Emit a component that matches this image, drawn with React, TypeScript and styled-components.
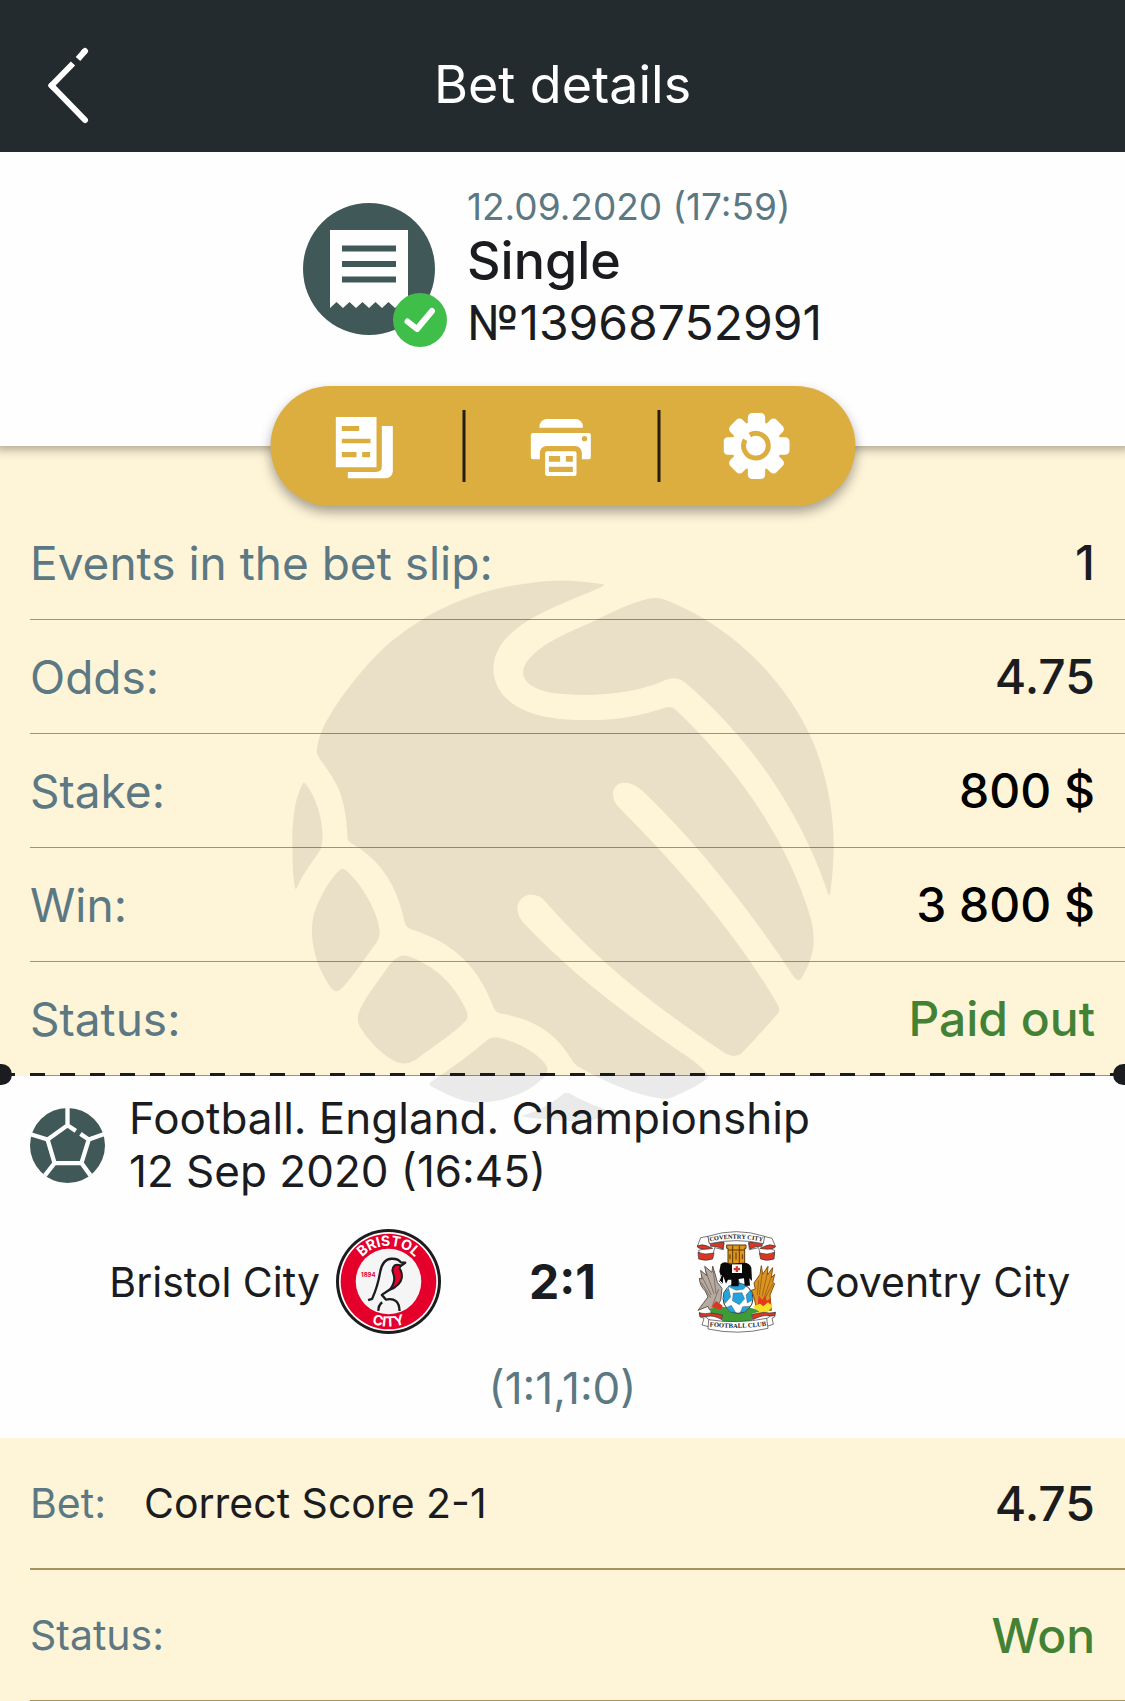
import React from "react";
import styled, { createGlobalStyle } from "styled-components";

const color = {
  bar: "#242b2e",
  ink: "#1a1c20",
  teal: "#405858",
  muted: "#5c7883",
  cream: "#fef4d8",
  gold: "#dcae40",
  green: "#438234",
  rule: "#a8935a",
};

const GlobalStyle = createGlobalStyle`
  *, *::before, *::after { box-sizing: border-box; }
  body {
    margin: 0;
    background: #fff;
    color: ${color.ink};
    font-family: Inter, Roboto, "Liberation Sans", sans-serif;
    overflow-x: hidden;
  }
  svg { display: block; }
`;

const Page = styled.main`
  display: flex;
  flex-direction: column;
  background: #fefefe;
`;

const TopBar = styled.header`
  position: relative;
  z-index: 3;
  display: grid;
  grid-template-columns: 1fr auto 1fr;
  align-items: center;
  height: 152px;
  padding: 18px 42px 0;
  background: ${color.bar};
  color: #fff;
`;

const Title = styled.h1`
  margin: 0;
  font-size: 52px;
  line-height: 60px;
  font-weight: 400;
`;

const IconButton = styled.button`
  justify-self: start;
  padding: 0;
  border: 0;
  background: none;
  color: inherit;
  cursor: pointer;
`;

const Hero = styled.section`
  position: relative;
  z-index: 2;
  display: flex;
  justify-content: center;
  gap: 32px;
  padding: 33px 30px 93px;
  background: #fefefe;
  box-shadow: 0 -3px 10px 6px rgba(0, 0, 0, 0.35);
`;

const SlipBadge = styled.div`
  position: relative;
  align-self: center;
  flex: none;
`;

const PaidMark = styled.div`
  position: absolute;
  right: -12px;
  bottom: -12px;
`;

const SlipText = styled.div`
  display: flex;
  flex-direction: column;
`;

const SlipDate = styled.time`
  font-size: 37px;
  line-height: 44px;
  color: ${color.muted};
`;

const SlipKind = styled.h2`
  margin: 0;
  font-size: 52px;
  line-height: 64px;
  font-weight: 500;
`;

const SlipNumber = styled.span`
  font-size: 48px;
  line-height: 60px;
`;

const ActionPill = styled.div`
  position: absolute;
  left: 50%;
  bottom: -60px;
  transform: translateX(-50%);
  display: grid;
  grid-template-columns: repeat(3, 1fr);
  align-items: center;
  width: 52%;
  height: 120px;
  border-radius: 60px;
  background: ${color.gold};
  box-shadow: 0 6px 12px rgba(0, 0, 0, 0.35);
`;

const ActionButton = styled.button`
  display: flex;
  align-items: center;
  justify-content: center;
  height: 72px;
  padding: 0;
  border: 0;
  background: none;
  cursor: pointer;

  &:not(:last-child) {
    border-right: 3px solid #241d10;
  }
`;

const Summary = styled.section`
  position: relative;
  padding-top: 60px;
  background: ${color.cream};
`;

const Rows = styled.dl`
  margin: 0;
  padding-left: 30px;
`;

const Row = styled.div<{ $size?: "regular" | "tall" | "last" }>`
  display: flex;
  align-items: center;
  gap: 38px;
  height: ${(p) => (p.$size === "tall" ? 132 : p.$size === "last" ? 131 : 114)}px;
  padding-right: 30px;
  border-bottom: ${(p) => (p.$size === "tall" ? 2 : 1)}px solid ${color.rule};
`;

const Label = styled.dt<{ $small?: boolean }>`
  font-size: ${(p) => (p.$small ? 41 : 46)}px;
  color: ${color.muted};
`;

const Value = styled.dd<{ $tone?: string; $plain?: boolean }>`
  margin: 0 0 0 ${(p) => (p.$plain ? "0" : "auto")};
  font-size: ${(p) => (p.$plain ? 41 : 48)}px;
  font-weight: ${(p) => (p.$plain ? 400 : 500)};
  color: ${(p) => p.$tone || color.ink};
`;

const Watermark = styled.svg`
  position: absolute;
  top: 124px;
  left: 50%;
  transform: translateX(-50%);
  z-index: 1;
  pointer-events: none;
`;

const TearLine = styled.div`
  position: absolute;
  left: 0;
  right: 0;
  bottom: 0;
  height: 3px;
  background: repeating-linear-gradient(90deg, ${color.ink} 0 15px, transparent 15px 30px);

  &::before,
  &::after {
    content: "";
    position: absolute;
    top: -9px;
    width: 12px;
    height: 21px;
    background: ${color.ink};
  }
  &::before {
    left: 0;
    border-radius: 0 12px 12px 0;
  }
  &::after {
    right: 0;
    border-radius: 12px 0 0 12px;
  }
`;

const Match = styled.section`
  padding: 16px 30px 25px;
`;

const MatchHead = styled.div`
  display: flex;
  align-items: center;
  gap: 24px;
`;

const MatchTitle = styled.p`
  margin: 0;
  font-size: 44px;
  line-height: 53px;
`;

const Scoreboard = styled.div`
  display: grid;
  grid-template-columns: 1fr 243px 1fr;
  align-items: center;
  margin-top: 31px;
`;

const Team = styled.div<{ $home?: boolean }>`
  display: flex;
  align-items: center;
  justify-content: ${(p) => (p.$home ? "flex-end" : "flex-start")};
  gap: 16px;
  font-size: 41px;
  line-height: 48px;
  white-space: nowrap;
`;

const Score = styled.strong`
  text-align: center;
  font-size: 48px;
  font-weight: 700;
`;

const HalfScore = styled.p`
  margin: 29px 0 0;
  text-align: center;
  font-size: 44px;
  line-height: 50px;
  color: ${color.muted};
`;

const Pick = styled.section`
  background: ${color.cream};
`;

const BackIcon = () => (
  <svg width="52" height="84" viewBox="0 0 52 84" fill="none" stroke="#fff" strokeWidth="6">
    <path d="M43 8L42 9" strokeLinecap="round" />
    <path d="M43 8L36 16" />
    <path d="M31 20.500L9.500 42.500L12 45" strokeLinejoin="round" />
    <path d="M9.500 42.500L43 77" strokeLinecap="round" />
  </svg>
);

const SlipIcon = () => (
  <svg width="132" height="132" viewBox="304 203 132 132">
    <circle cx="370" cy="269" r="66" fill={color.teal} />
    <path
      fill="#fefefe"
      d="M331 230H409V308L402.500 302L396 308L389.500 302L383 308L376.500 302L370 308L363.500 302L357 308L350.500 302L344 308L337.500 302L331 308Z"
    />
    <path d="M343 248.500H397M343 264H397M343 279.500H397" stroke={color.teal} strokeWidth="6" />
  </svg>
);

const CheckIcon = () => (
  <svg width="54" height="54" viewBox="0 0 54 54">
    <circle cx="27" cy="27" r="27" fill="#3fbf4a" />
    <path
      d="M14.500 28.500L24 36L39 18"
      fill="none"
      stroke="#fff"
      strokeWidth="6"
      strokeLinecap="round"
      strokeLinejoin="round"
    />
  </svg>
);

const CopyIcon = () => (
  <svg width="66" height="66" viewBox="41 69 198 198">
    <path fill="#fff" d="M48 81H170V232H48Z" />
    <path fill="#fff" d="M186 108h33v135a22 22 0 0 1-22 22h-113v-19h85q17 0 17-17z" />
    <path fill={color.gold} d="M66 108h52v15h-52zM66 146h86v14h-86zM66 186h44v16h-44zM127 186h24v16h-24z" />
  </svg>
);

const PrintIcon = () => (
  <svg width="66" height="66" viewBox="626 69 198 198">
    <path fill="#fff" d="M659 113v-4a22 22 0 0 1 22-22h86a22 22 0 0 1 22 22v4z" />
    <path
      fill="#fff"
      d="M639 129h168a6 6 0 0 1 6 6v67a6 6 0 0 1-6 6h-21v-20a20 20 0 0 0-20-20h-86a20 20 0 0 0-20 20v20h-21a6 6 0 0 1-6-6v-67a6 6 0 0 1 6-6z"
    />
    <rect x="676" y="184" width="94" height="74" rx="6" fill="#fff" />
    <path fill={color.gold} d="M687 198h34v17h-34zM738 198h21v17h-21zM687 230h72v16h-72z" />
    <circle cx="794" cy="146" r="8" fill={color.gold} />
  </svg>
);

const GearIcon = () => (
  <svg width="68" height="66" viewBox="-99 -99 204 198">
    <g fill="#fff">
      <circle r="74" />
      <rect x="-26" y="-99" width="52" height="198" rx="13" />
      <rect x="-99" y="-26" width="198" height="52" rx="13" />
      <rect x="-26" y="-98" width="52" height="196" rx="13" transform="rotate(45)" />
      <rect x="-26" y="-98" width="52" height="196" rx="13" transform="rotate(-45)" />
    </g>
    <path
      d="M-20 -33A37 37 0 1 1 -34 -19"
      fill="none"
      stroke={color.gold}
      strokeWidth="15"
    />
    <path d="M-42 -36L-12 -12" stroke="#fff" strokeWidth="13" />
  </svg>
);

const BallIcon = () => (
  <svg width="75" height="75" viewBox="90 137 226 226">
    <circle cx="203" cy="250" r="113" fill={color.teal} />
    <path
      fill="none"
      stroke="#fefefe"
      strokeWidth="13"
      d="M203 137V190M228 206L203 189L143 232L164 303H245L267 232L242 215M143 232L94 217M267 232L312 216M164 303L135 340M245 303L272 340"
    />
  </svg>
);

const BristolCrest = () => (
  <svg width="105" height="105" viewBox="49 41 314 314" role="img" aria-label="Bristol City crest">
    <defs>
      <path id="bristol-top" d="M99 198A107 107 0 0 1 313 198" />
      <path id="bristol-bottom" d="M71 198A135 135 0 0 0 341 198" />
    </defs>
    <circle cx="206" cy="198" r="157" fill="#1c1c1e" />
    <circle cx="206" cy="198" r="148" fill="#fff" />
    <circle cx="206" cy="198" r="143" fill="#e4002b" />
    <circle cx="206" cy="198" r="98" fill="#f5f5f6" />
    <g fill="#fff" fontWeight="700" fontSize="42" textAnchor="middle">
      <text>
        <textPath href="#bristol-top" startOffset="50%">BRISTOL</textPath>
      </text>
      <text>
        <textPath href="#bristol-bottom" startOffset="50%">CITY</textPath>
      </text>
    </g>
    <text x="124" y="184" fontSize="18" fontWeight="700" fill="#e4002b">1894</text>
    <path
      d="M224 150Q214 160 220 174Q230 200 208 224Q242 210 246 186Q247 168 239 160L242 150Q232 146 224 150Z"
      fill="#e4002b"
      stroke="#1c1c1e"
      strokeWidth="6"
      strokeLinejoin="round"
    />
    <g fill="none" stroke="#1c1c1e" strokeWidth="7" strokeLinejoin="round">
      <path d="M145 254L157 250Q174 212 181 170Q188 131 215 130Q235 129 243 141L256 142L242 152" />
      <path d="M210 222L186 238L198 252Q238 244 239 286" />
      <path d="M187 260Q175 270 176 286" />
    </g>
  </svg>
);

const CoventryCrest = () => (
  <svg width="105" height="105" viewBox="12 42 315 315" role="img" aria-label="Coventry City crest">
    <defs>
      <path id="coventry-top" d="M84 81Q168 61 254 81" />
      <path id="coventry-bottom" d="M86 334Q174 344 262 332" />
    </defs>
    <g stroke="#333" strokeWidth="2" strokeLinejoin="round">
      <path fill="#fff" d="M84 64L62 68L52 94L80 100L56 106L58 120L100 116L104 98L130 104L132 84L88 84Z" />
      <path fill="#fff" d="M252 64L276 70L286 94L262 98L284 106L282 122L240 116L236 98L208 104L206 84L250 84Z" />
      <path fill="#dc3524" d="M52 93Q66 86 82 93L98 100Q70 106 54 98ZM54 112Q78 122 102 114L98 132Q76 140 56 132ZM90 82L132 82L128 102Q110 92 92 94Z" />
      <path fill="#dc3524" d="M286 93Q270 86 256 93L240 100Q268 106 284 98ZM284 112Q260 122 238 114L242 132Q262 140 282 132ZM248 82L206 82L210 102Q228 92 246 94Z" />
      <path fill="#fff" d="M84 64Q168 36 254 64L250 86Q168 68 88 86Z" />
    </g>
    <path fill="#e0961c" stroke="#5b3808" strokeWidth="3" d="M140 90H198V100H194V146H144V100H140Z" />
    <path stroke="#5b3808" strokeWidth="3" d="M158 92V145M178 92V145M145 105H194M150 118V132M168 112V134M187 118V132" />
    <path
      fill="#b7aaa0"
      stroke="#62584f"
      strokeWidth="3"
      d="M98 153L96 172L74 154L80 182L62 166L66 192L58 190Q60 214 76 228L84 246Q70 264 54 286L84 274L88 284L108 280L122 256L126 220L112 202Q106 178 98 153Z"
    />
    <path stroke="#62584f" strokeWidth="2" fill="none" d="M100 168L108 236M78 170L102 236M66 185L94 240M64 202L92 248M116 222L98 270" />
    <path
      fill="#dc9420"
      stroke="#855210"
      strokeWidth="3"
      d="M244 152L240 178L222 204L226 222L214 226L222 246L230 284L274 286L270 240L284 206L278 202L284 178L274 188L278 158L262 180L264 154L248 178Z"
    />
    <path stroke="#855210" strokeWidth="2" fill="none" d="M246 178L238 240M262 176L246 244M274 186L252 248M278 206L254 252M236 196L232 240" />
    <path fill="#e4381f" d="M236 240L246 254L256 242L260 258L272 250L270 284L232 284Z" />
    <path fill="#f7df25" d="M220 274L240 266L250 274L264 262L278 274L262 292L234 294Z" />
    <path fill="#3e9b35" d="M90 282Q124 268 170 284Q214 270 238 290L216 296V322H126L128 300L92 298Z" />
    <path fill="#dc3524" d="M94 276L108 258L128 272L122 284Z" />
    <circle cx="174" cy="250" r="45" fill="#fff" stroke="#333" strokeWidth="3" />
    <path
      fill="#23a4df"
      stroke="#333"
      strokeWidth="1"
      d="M160 234L186 233L194 251L178 269L157 257ZM144 214L166 204L202 210L190 223L168 226ZM130 234L146 220L152 246L134 266ZM212 224L219 254L202 264L198 240ZM138 278L154 271L168 294L152 291ZM188 275L210 274L196 290L180 294ZM166 206L172 192L182 206Z"
    />
    <path
      fill="#080808"
      d="M122 148Q134 136 150 148L182 144Q208 140 214 158L216 198L208 190L210 212H194L192 190L176 192V214H154V194L144 194L138 206L130 184L128 208L116 198Q126 184 118 170Z"
    />
    <path d="M124 180L118 196L128 206" stroke="#fff" strokeWidth="3" fill="none" />
    <path fill="#fff" d="M156 148H186V174H156Z" />
    <path fill="#dc3524" d="M167 154h7v5h6v7h-6v5h-7v-5h-6v-7h6z" />
    <g stroke="#333" strokeWidth="2" strokeLinejoin="round">
      <path fill="#fff" d="M90 316L58 292L60 306L72 310L66 330L90 336ZM256 314L286 292L284 306L276 310L280 328L260 334Z" />
      <path fill="#dc3524" d="M58 294Q76 298 94 294L128 300L126 314Q100 300 84 304Q68 308 60 304ZM286 292Q268 296 252 292L216 298L218 314Q246 300 262 302Q276 304 284 302Z" />
      <path fill="#fff" d="M86 314Q174 328 260 310L264 340Q174 362 84 342Z" />
    </g>
    <g fill="#1c1c1e" fontFamily="Liberation Serif, serif" fontWeight="700" textAnchor="middle">
      <text fontSize="19">
        <textPath href="#coventry-top" startOffset="50%">COVENTRY CITY</textPath>
      </text>
      <text fontSize="20">
        <textPath href="#coventry-bottom" startOffset="50%">FOOTBALL CLUB</textPath>
      </text>
    </g>
  </svg>
);

const BallWatermark = () => (
  <Watermark width="560" height="560" viewBox="-6 0 1568 1568" aria-hidden="true">
    <g fill="#000" fillOpacity="0.08">
      <path d="M892 40Q780 22 700 34C520 55 390 120 280 215C200 290 130 390 105 445Q84 495 90 515C95 530 130 570 148 610C172 665 172 720 175 755Q178 762 190 768C270 815 315 890 333 980Q337 1000 350 1005C430 1030 480 1065 515 1105C550 1145 570 1190 586 1230Q590 1238 600 1241C700 1258 760 1300 800 1368Q812 1388 825 1393C900 1435 980 1470 1050 1480Q1068 1483 1085 1476C1120 1460 1155 1445 1180 1425Q1187 1418 1180 1408C1160 1385 1130 1365 1100 1345C950 1240 800 1130 665 985C640 955 648 920 680 910Q710 905 730 930C870 1090 1030 1220 1235 1355Q1262 1368 1278 1353C1320 1310 1350 1275 1380 1242Q1388 1232 1380 1218C1270 1030 1120 850 935 665C910 640 912 602 945 596Q970 592 1000 618C1150 760 1300 950 1425 1140Q1438 1155 1446 1143C1470 1100 1480 1070 1480 1035Q1480 1005 1472 975C1400 740 1260 550 1092 390Q1082 380 1065 385C980 415 900 422 830 420C740 418 660 405 610 350C570 300 575 235 625 185C690 120 790 90 885 48Q895 43 892 40Z" />
      <path d="M1060 82Q1035 75 1005 83C960 95 900 125 850 150C780 180 710 210 675 260C650 300 680 330 740 343C830 356 950 350 1020 325C1050 316 1065 305 1085 303Q1105 303 1120 315C1300 470 1440 670 1520 905Q1524 915 1526 905C1545 770 1540 640 1480 485C1400 300 1240 150 1060 82Z" />
      <path d="M50 597C30 630 20 690 20 755Q20 850 27 888Q29 898 34 888C50 850 75 820 98 785Q105 770 105 745C104 690 85 635 60 602Q53 593 50 597Z" />
      <path d="M155 838C120 870 95 920 80 965C65 1030 85 1110 130 1172Q142 1186 157 1173C190 1140 220 1090 255 1045Q265 1028 265 1015C262 960 215 880 172 842Q162 833 155 838Z" />
      <path d="M320 1082Q335 1075 355 1085C430 1115 480 1170 508 1235Q514 1248 508 1260C470 1300 420 1330 365 1372Q335 1390 305 1375C265 1352 230 1315 208 1277Q200 1262 206 1240C220 1200 255 1160 285 1115Q300 1092 320 1082Z" />
      <path d="M570 1313Q582 1306 600 1310C660 1325 710 1355 733 1390Q738 1405 728 1417C680 1470 600 1492 530 1492C480 1485 440 1462 407 1445Q400 1440 410 1432C465 1395 520 1355 570 1313Z" />
      <path d="M780 1466Q788 1461 800 1467C830 1485 880 1505 910 1515Q890 1540 830 1545Q740 1540 680 1533Q655 1530 670 1526C710 1515 750 1492 780 1466Z" />
    </g>
  </Watermark>
);

const summary = [
  { label: "Events in the bet slip:", value: "1" },
  { label: "Odds:", value: "4.75" },
  { label: "Stake:", value: "800 $", tone: "#000" },
  { label: "Win:", value: "3 800 $", tone: "#000" },
  { label: "Status:", value: "Paid out", tone: color.green },
];

export default function App() {
  return (
    <>
      <GlobalStyle />
      <Page>
        <TopBar>
          <IconButton type="button" aria-label="Back">
            <BackIcon />
          </IconButton>
          <Title>Bet details</Title>
        </TopBar>

        <Hero>
          <SlipBadge>
            <SlipIcon />
            <PaidMark>
              <CheckIcon />
            </PaidMark>
          </SlipBadge>
          <SlipText>
            <SlipDate dateTime="2020-09-12T17:59">12.09.2020 (17:59)</SlipDate>
            <SlipKind>Single</SlipKind>
            <SlipNumber>№13968752991</SlipNumber>
          </SlipText>
          <ActionPill>
            <ActionButton type="button" aria-label="Copy">
              <CopyIcon />
            </ActionButton>
            <ActionButton type="button" aria-label="Print">
              <PrintIcon />
            </ActionButton>
            <ActionButton type="button" aria-label="Settings">
              <GearIcon />
            </ActionButton>
          </ActionPill>
        </Hero>

        <Summary>
          <Rows>
            {summary.map((item) => (
              <Row key={item.label}>
                <Label>{item.label}</Label>
                <Value $tone={item.tone}>{item.value}</Value>
              </Row>
            ))}
          </Rows>
          <BallWatermark />
          <TearLine />
        </Summary>

        <Match>
          <MatchHead>
            <BallIcon />
            <MatchTitle>
              Football. England. Championship
              <br />
              12 Sep 2020 (16:45)
            </MatchTitle>
          </MatchHead>
          <Scoreboard>
            <Team $home>
              <span>Bristol City</span>
              <BristolCrest />
            </Team>
            <Score>2:1</Score>
            <Team>
              <CoventryCrest />
              <span>Coventry City</span>
            </Team>
          </Scoreboard>
          <HalfScore>(1:1,1:0)</HalfScore>
        </Match>

        <Pick>
          <Rows>
            <Row $size="tall">
              <Label $small>Bet:</Label>
              <Value $plain>Correct Score 2-1</Value>
              <Value>4.75</Value>
            </Row>
            <Row $size="last">
              <Label $small>Status:</Label>
              <Value $tone={color.green}>Won</Value>
            </Row>
          </Rows>
        </Pick>
      </Page>
    </>
  );
}
